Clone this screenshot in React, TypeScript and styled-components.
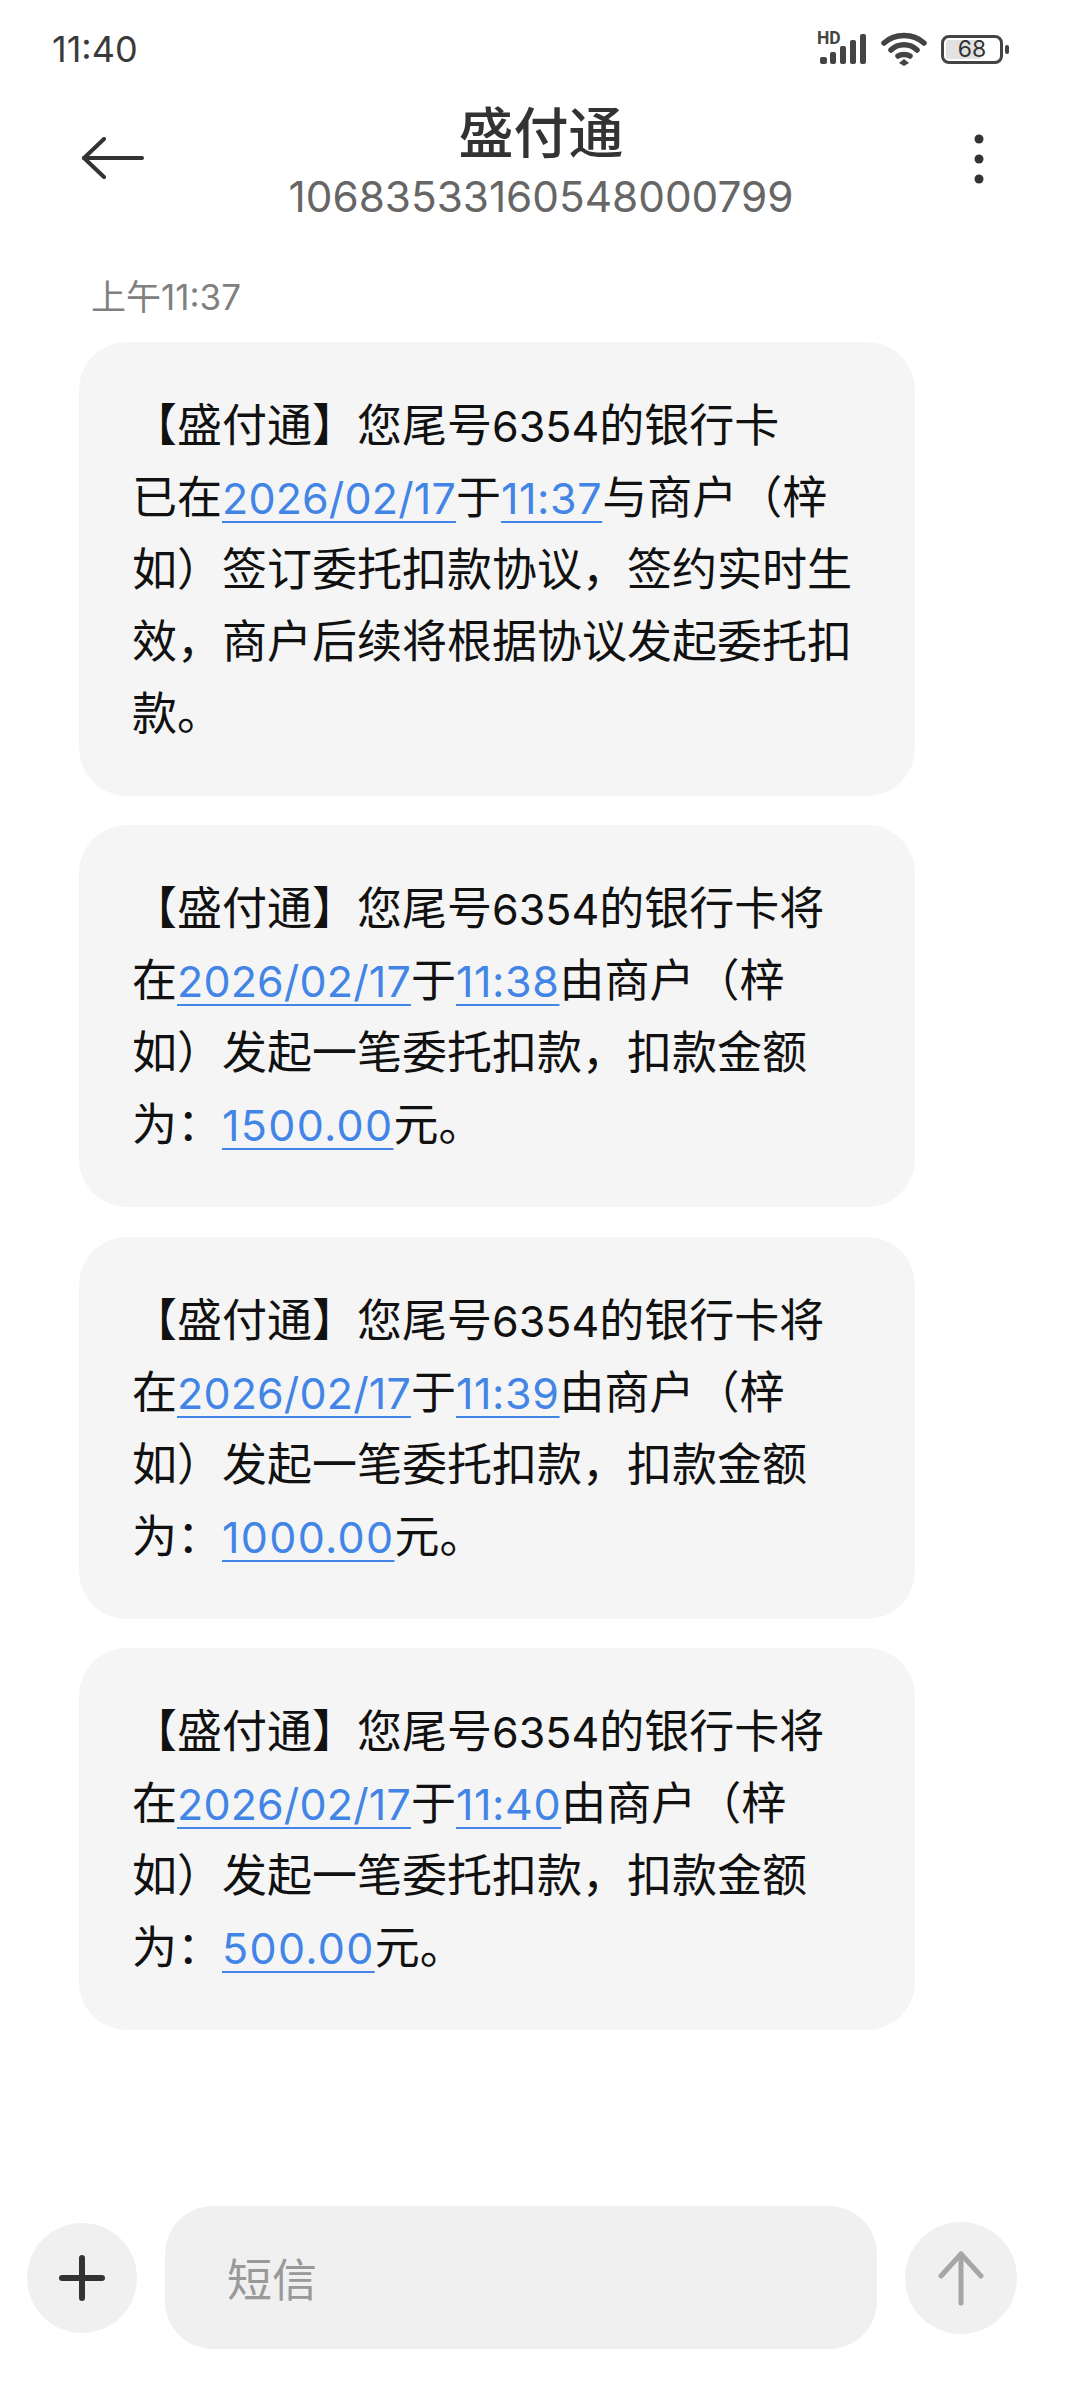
import React from 'react'
import styled, { createGlobalStyle } from 'styled-components'

const GlobalStyle = createGlobalStyle`
  html, body {
    margin: 0;
    padding: 0;
    background: #fff;
  }
  body {
    font-family: Inter, "Noto Sans CJK SC", sans-serif;
  }
`

const Page = styled.div`
  width: 1080px;
  height: 2400px;
  display: flex;
  flex-direction: column;
  overflow: hidden;
  background: #fff;
`

const StatusBar = styled.div`
  height: 96px;
  box-sizing: border-box;
  padding: 2px 70px 0 52px;
  display: flex;
  align-items: center;
  justify-content: space-between;
`

const Clock = styled.span`
  font-size: 36px;
  color: #3a3a3a;
`

const StatusIcons = styled.div`
  display: flex;
  align-items: center;
  gap: 10px;
`

const Battery = styled.div`
  position: relative;
  width: 62px;
  height: 29px;
  box-sizing: border-box;
  border: 3px solid #444;
  border-radius: 8px;
  padding: 2px;
  margin-left: 4px;
  margin-right: 7px;
  &::after {
    content: '';
    position: absolute;
    right: -9px;
    top: 7px;
    width: 4px;
    height: 9px;
    border-radius: 2px;
    background: #444;
  }
`

const BatteryFill = styled.div`
  height: 100%;
  border-radius: 2px;
  background: #e2e2e2;
`

const BatteryLabel = styled.span`
  position: absolute;
  inset: 0;
  display: flex;
  align-items: center;
  justify-content: center;
  font-size: 23px;
  color: #333;
`

const Header = styled.header`
  display: grid;
  grid-template-columns: 1fr auto 1fr;
  align-items: center;
  padding: 0 80px 0 82px;
  height: 132px;
`

const BackButton = styled.div`
  display: flex;
  justify-content: flex-start;
  margin-bottom: 9px;
`

const MoreButton = styled.div`
  display: flex;
  justify-content: flex-end;
  padding-right: 16px;
  margin-bottom: 6px;
`

const TitleBlock = styled.div`
  display: flex;
  flex-direction: column;
  align-items: center;
`

const Title = styled.div`
  font-size: 55px;
  font-weight: 500;
  line-height: 70px;
  color: #333;
`

const Subtitle = styled.div`
  font-size: 42.3px;
  line-height: 58px;
  color: #666;
  white-space: nowrap;
`

const Thread = styled.main`
  padding: 44px 0 0 79px;
  display: flex;
  flex-direction: column;
  gap: 29.2px;
`

const Stamp = styled.div`
  font-size: 35px;
  line-height: 50px;
  color: #808080;
  padding-left: 12px;
  margin-bottom: -9px;
`

const Bubble = styled.div`
  width: 836px;
  box-sizing: border-box;
  padding: 48px 53px 46px;
  border-radius: 48px;
  background: #f5f5f5;
`

const Line = styled.div`
  font-size: 45px;
  line-height: 72px;
  color: #111;
  white-space: nowrap;
`

const Num = styled.span`
  font-size: 43px;
`

const Link = styled.span<{ $spacing: number }>`
  font-size: 43px;
  letter-spacing: ${(p) => p.$spacing}px;
  color: #4285e6;
  text-decoration: underline;
  text-decoration-thickness: 2px;
  text-underline-offset: 7px;
`

const Composer = styled.footer`
  margin-top: auto;
  padding: 0 63px 51px 27px;
  display: flex;
  align-items: center;
`

const RoundButton = styled.div<{ $size: number }>`
  width: ${(p) => p.$size}px;
  height: ${(p) => p.$size}px;
  flex: none;
  border-radius: 50%;
  background: #f0f0f0;
  display: flex;
  align-items: center;
  justify-content: center;
`

const InputBox = styled.div`
  flex: 1;
  height: 143px;
  margin: 0 28px;
  box-sizing: border-box;
  padding-left: 62px;
  border-radius: 48px;
  background: #f0f0f0;
  display: flex;
  align-items: center;
  font-size: 45px;
  color: #999;
`

type Part = string | { link: string; spacing: number } | { num: string }
type Message = Part[][]

const date = (value: string): Part => ({ link: value, spacing: 0.15 })
const time = (value: string): Part => ({ link: value, spacing: 0.6 })
const amount = (value: string): Part => ({ link: value, spacing: 1.3 })

const opening = (tail: string): Part[] => ['【盛付通】您尾号', { num: '6354' }, tail]

const messages: Message[] = [
  [
    opening('的银行卡'),
    ['已在', date('2026/02/17'), '于', time('11:37'), '与商户（梓'],
    ['如）签订委托扣款协议，签约实时生'],
    ['效，商户后续将根据协议发起委托扣'],
    ['款。'],
  ],
  [
    opening('的银行卡将'),
    ['在', date('2026/02/17'), '于', time('11:38'), '由商户（梓'],
    ['如）发起一笔委托扣款，扣款金额'],
    ['为：', amount('1500.00'), '元。'],
  ],
  [
    opening('的银行卡将'),
    ['在', date('2026/02/17'), '于', time('11:39'), '由商户（梓'],
    ['如）发起一笔委托扣款，扣款金额'],
    ['为：', amount('1000.00'), '元。'],
  ],
  [
    opening('的银行卡将'),
    ['在', date('2026/02/17'), '于', time('11:40'), '由商户（梓'],
    ['如）发起一笔委托扣款，扣款金额'],
    ['为：', amount('500.00'), '元。'],
  ],
]

const renderPart = (part: Part, key: number) => {
  if (typeof part === 'string') return <span key={key}>{part}</span>
  if ('link' in part) {
    return (
      <Link key={key} $spacing={part.spacing}>
        {part.link}
      </Link>
    )
  }
  return <Num key={key}>{part.num}</Num>
}

const SignalIcon = () => (
  <svg width='54' height='44' viewBox='0 -8 54 44' style={{ marginTop: -8 }}>
    <text x='0' y='13' fontFamily='Roboto, sans-serif' fontWeight='700' fontSize='17.5' fill='#444'>
      HD
    </text>
    <rect x='3' y='26' width='7' height='7' rx='2' fill='#444' />
    <rect x='13' y='21' width='6' height='12' rx='2' fill='#444' />
    <rect x='23' y='15' width='6' height='18' rx='2' fill='#444' />
    <rect x='33' y='9' width='6' height='24' rx='2' fill='#444' />
    <rect x='43' y='3' width='6' height='30' rx='2' fill='#444' />
  </svg>
)

const WifiIcon = () => (
  <svg width='46' height='34' viewBox='0 0 46 34' fill='none' stroke='#444' strokeWidth='5.5' strokeLinecap='round'>
    <path d='M3 11 C14 1 32 1 43 11' />
    <path d='M10 18 C17 11 29 11 36 18' />
    <path d='M17 24 C20 22 26 22 29 24' />
    <path d='M23 27 L28 31 L23 34 L18 31 Z' fill='#444' stroke='none' />
  </svg>
)

const BackIcon = () => (
  <svg width='62' height='42' viewBox='0 0 62 42' fill='none' stroke='#333' strokeWidth='4' strokeLinecap='round' strokeLinejoin='round'>
    <path d='M22 2 L2 21 L22 40' />
    <path d='M2 21 H60' />
  </svg>
)

const MoreIcon = () => (
  <svg width='10' height='50' viewBox='0 0 10 50' fill='#333'>
    <circle cx='5' cy='5' r='4.5' />
    <circle cx='5' cy='25' r='4.5' />
    <circle cx='5' cy='45' r='4.5' />
  </svg>
)

const PlusIcon = () => (
  <svg width='46' height='46' viewBox='0 0 46 46' stroke='#333' strokeWidth='6' strokeLinecap='round'>
    <path d='M23 3 V43' />
    <path d='M3 23 H43' />
  </svg>
)

const SendIcon = () => (
  <svg width='46' height='56' viewBox='0 0 46 56' fill='none' stroke='#a6a6a6' strokeWidth='5' strokeLinecap='round' strokeLinejoin='round'>
    <path d='M23 4 V53' />
    <path d='M3 26 L23 4 L43 26' />
  </svg>
)

export default function App() {
  return (
    <Page lang='zh-CN'>
      <GlobalStyle />
      <StatusBar>
        <Clock>11:40</Clock>
        <StatusIcons>
          <SignalIcon />
          <WifiIcon />
          <Battery>
            <BatteryFill style={{ width: '68%' }} />
            <BatteryLabel>68</BatteryLabel>
          </Battery>
        </StatusIcons>
      </StatusBar>
      <Header>
        <BackButton>
          <BackIcon />
        </BackButton>
        <TitleBlock>
          <Title>盛付通</Title>
          <Subtitle>10683533160548000799</Subtitle>
        </TitleBlock>
        <MoreButton>
          <MoreIcon />
        </MoreButton>
      </Header>
      <Thread>
        <Stamp>上午11:37</Stamp>
        {messages.map((lines, i) => (
          <Bubble key={i}>
            {lines.map((parts, j) => (
              <Line key={j}>{parts.map(renderPart)}</Line>
            ))}
          </Bubble>
        ))}
      </Thread>
      <Composer>
        <RoundButton $size={110}>
          <PlusIcon />
        </RoundButton>
        <InputBox>短信</InputBox>
        <RoundButton $size={112}>
          <SendIcon />
        </RoundButton>
      </Composer>
    </Page>
  )
}
